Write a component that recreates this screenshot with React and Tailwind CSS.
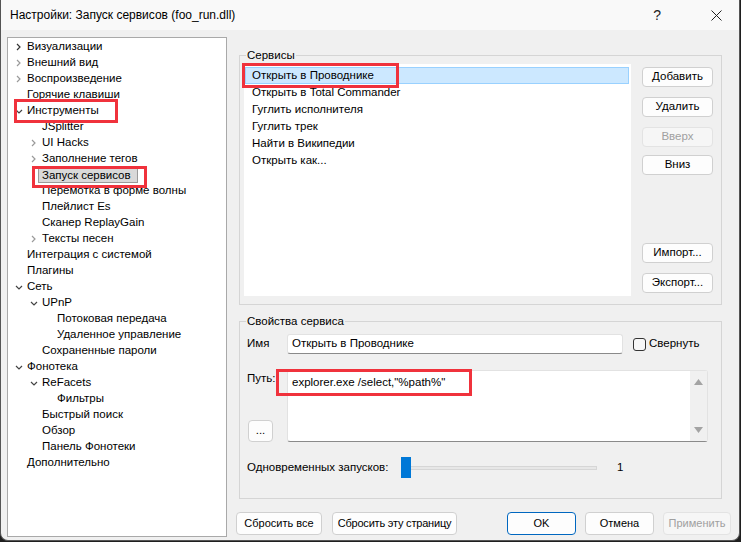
import React from "react";

const tree = [
  { lvl: 0, ch: "r", dark: true, text: "Визуализации" },
  { lvl: 0, ch: "r", text: "Внешний вид" },
  { lvl: 0, ch: "r", text: "Воспроизведение" },
  { lvl: 0, text: "Горячие клавиши" },
  { lvl: 0, ch: "d", text: "Инструменты" },
  { lvl: 1, text: "JSplitter" },
  { lvl: 1, ch: "r", text: "UI Hacks" },
  { lvl: 1, ch: "r", text: "Заполнение тегов" },
  { lvl: 1, text: "Запуск сервисов", selected: true },
  { lvl: 1, text: "Перемотка в форме волны" },
  { lvl: 1, text: "Плейлист Es" },
  { lvl: 1, text: "Сканер ReplayGain" },
  { lvl: 1, ch: "r", text: "Тексты песен" },
  { lvl: 0, text: "Интеграция с системой" },
  { lvl: 0, text: "Плагины" },
  { lvl: 0, ch: "d", text: "Сеть" },
  { lvl: 1, ch: "d", text: "UPnP" },
  { lvl: 2, text: "Потоковая передача" },
  { lvl: 2, text: "Удаленное управление" },
  { lvl: 1, text: "Сохраненные пароли" },
  { lvl: 0, ch: "d", text: "Фонотека" },
  { lvl: 1, ch: "d", text: "ReFacets" },
  { lvl: 2, text: "Фильтры" },
  { lvl: 1, text: "Быстрый поиск" },
  { lvl: 1, text: "Обзор" },
  { lvl: 1, text: "Панель Фонотеки" },
  { lvl: 0, text: "Дополнительно" },
];

const services = [
  "Открыть в Проводнике",
  "Открыть в Total Commander",
  "Гуглить исполнителя",
  "Гуглить трек",
  "Найти в Википедии",
  "Открыть как...",
];

const indent = ["pl-0", "pl-[15px]", "pl-[30px]"];

function Chevron({ type, dark }) {
  const color = dark ? "#333" : "#9a9a9a";
  if (type === "r") {
    return (
      <svg width="5" height="8" viewBox="0 0 5 8" className="ml-[8px]">
        <path d="M1 1 L4 4 L1 7" fill="none" stroke={color} strokeWidth="1.2" />
      </svg>
    );
  }
  return (
    <svg width="8" height="5" viewBox="0 0 8 5" className="ml-[7px]">
      <path d="M1 1 L4 4 L7 1" fill="none" stroke="#444" strokeWidth="1.2" />
    </svg>
  );
}

function Btn({ children, className = "", disabled, primary }) {
  return (
    <div
      className={
        "flex items-center justify-center whitespace-nowrap rounded-[4px] border " +
        (disabled
          ? "border-[#e3e3e3] bg-[#f6f6f6] text-[#a0a0a0] "
          : primary
          ? "border-[#0067c0] bg-[#fdfdfd] text-black "
          : "border-[#d0d0d0] bg-[#fdfdfd] text-black ") +
        className
      }
    >
      {children}
    </div>
  );
}

function RedBox({ className }) {
  return <div className={"pointer-events-none absolute border-[3px] border-[#f0323c] " + className} />;
}

export default function App() {
  return (
    <div className="relative h-[542px] w-[741px] overflow-hidden bg-[#1f1f1f] font-['Liberation_Sans',Arial,sans-serif] text-[11.5px] text-black">
      <div className="relative flex h-[541px] w-[740px] flex-col rounded-b-[8px] border-x border-b border-[#555] bg-[#f0f0f0]">
        {/* title bar */}
        <div className="flex h-[30px] items-center bg-[#f9f9f9]">
          <span className="ml-[9px] text-[12px]">Настройки: Запуск сервисов (foo_run.dll)</span>
          <span className="ml-auto mr-[50px] text-[14px] text-[#222]">?</span>
          <svg width="11" height="11" viewBox="0 0 11 11" className="mr-[17px]">
            <path d="M0.5 0.5 L10.5 10.5 M10.5 0.5 L0.5 10.5" stroke="#222" strokeWidth="1" />
          </svg>
        </div>

        <div className="flex pt-[7px]">
          {/* tree */}
          <div className="ml-[6px] h-[500px] w-[220px] border border-[#a9a9a9] bg-white pt-[1px]">
            {tree.map((t, i) => (
              <div key={i} className={"flex h-[16px] items-center whitespace-nowrap " + indent[t.lvl]}>
                <div className="flex w-[19px] items-center">
                  {t.ch && <Chevron type={t.ch} dark={t.dark} />}
                </div>
                {t.selected ? (
                  <span className="-ml-[4px] border border-[#9a9a9a] bg-[#d9d9d9] pl-[3px] pr-[6px] leading-[13px]">
                    {t.text}
                  </span>
                ) : (
                  <span>{t.text}</span>
                )}
              </div>
            ))}
          </div>

          {/* right column */}
          <div className="ml-[9px] flex w-[495px] flex-col pt-[18px]">
            {/* services group */}
            <div className="relative ml-[3px] h-[250px] w-[483px] border border-[#d5d5d5]">
              <span className="absolute -top-[8px] left-[6px] bg-[#f0f0f0] px-[1px] leading-[14px]">Сервисы</span>
              <div className="flex pl-[4px] pt-[8px]">
                <div className="h-[232px] w-[387px] bg-white pl-[1px] pt-[3px]">
                  {services.map((s, i) => (
                    <div
                      key={s}
                      className={
                        "flex h-[17px] w-[384px] items-center whitespace-nowrap border pl-[6px] pt-[1px] " +
                        (i === 0 ? "border-[#99d1ff] bg-[#cce8ff]" : "border-transparent")
                      }
                    >
                      {s}
                    </div>
                  ))}
                </div>
                <div className="ml-[11px] flex w-[71px] flex-col">
                  <Btn className="mt-[3px] h-[20px]">Добавить</Btn>
                  <Btn className="mt-[10px] h-[20px]">Удалить</Btn>
                  <Btn className="mt-[10px] h-[20px]" disabled>Вверх</Btn>
                  <Btn className="mt-[8px] h-[20px]">Вниз</Btn>
                  <Btn className="mt-[68px] h-[20px]">Импорт...</Btn>
                  <Btn className="mt-[10px] h-[20px]">Экспорт...</Btn>
                </div>
              </div>
            </div>

            {/* properties group */}
            <div className="relative ml-[3px] mt-[16px] h-[178px] w-[483px] border border-[#d5d5d5]">
              <span className="absolute -top-[8px] left-[6px] bg-[#f0f0f0] px-[1px] leading-[14px]">Свойства сервиса</span>
              <div className="flex flex-col pl-[7px] pt-[12px]">
                <div className="flex h-[20px] items-center">
                  <span className="w-[40px]">Имя</span>
                  <div className="flex h-[20px] w-[336px] items-center rounded-[3px] border border-[#e2e2e2] border-b-[#8a8a8a] bg-white pl-[4px]">
                    Открыть в Проводнике
                  </div>
                  <div className="ml-[10px] h-[13px] w-[13px] rounded-[3px] border border-[#333] bg-[#f7f7f7]" />
                  <span className="ml-[3px]">Свернуть</span>
                </div>

                <div className="mt-[16px] flex h-[72px]">
                  <div className="flex w-[40px] flex-col">
                    <span className="mt-[1px] leading-[14px]">Путь:</span>
                    <Btn className="ml-[1px] mt-auto h-[22px] w-[25px]">...</Btn>
                  </div>
                  <div className="flex h-[72px] w-[421px] rounded-[3px] border border-[#e2e2e2] border-b-[#8a8a8a] bg-white">
                    <div className="flex-1 pl-[4px] pt-[4px] leading-[14px]">explorer.exe /select,"%path%"</div>
                    <div className="flex w-[17px] flex-col items-center justify-between bg-[#f0f0f0] py-[8px]">
                      <svg width="9" height="6" viewBox="0 0 9 6"><path d="M0 6 L4.5 0 L9 6 Z" fill="#a3a3a3" /></svg>
                      <svg width="9" height="6" viewBox="0 0 9 6"><path d="M0 0 L4.5 6 L9 0 Z" fill="#a3a3a3" /></svg>
                    </div>
                  </div>
                </div>

                <div className="mt-[15px] flex h-[21px] items-center">
                  <span className="w-[154px]">Одновременных запусков:</span>
                  <div className="relative flex h-[21px] w-[196px] items-center">
                    <div className="h-[4px] w-full border border-[#d6d6d6] bg-[#e7e7e7]" />
                    <div className="absolute left-0 top-0 h-[21px] w-[10px] bg-[#0078d7]" />
                  </div>
                  <span className="ml-[20px]">1</span>
                </div>
              </div>
            </div>

            {/* bottom buttons */}
            <div className="mt-[13px] flex h-[23px] text-[11px]">
              <Btn className="w-[86px]">Сбросить все</Btn>
              <Btn className="ml-[10px] w-[125px] tracking-[-0.2px]">Сбросить эту страницу</Btn>
              <Btn className="ml-[50px] w-[69px]" primary>OK</Btn>
              <Btn className="ml-[9px] w-[69px]">Отмена</Btn>
              <Btn className="ml-[9px] w-[68px]" disabled>Применить</Btn>
            </div>
          </div>
        </div>

        {/* annotation boxes */}
        <RedBox className="left-[13px] top-[99px] h-[24px] w-[104px]" />
        <RedBox className="left-[31px] top-[166px] h-[22px] w-[115px]" />
        <RedBox className="left-[241px] top-[63px] h-[25px] w-[157px]" />
        <RedBox className="left-[275px] top-[369px] h-[27px] w-[196px]" />
      </div>
    </div>
  );
}
